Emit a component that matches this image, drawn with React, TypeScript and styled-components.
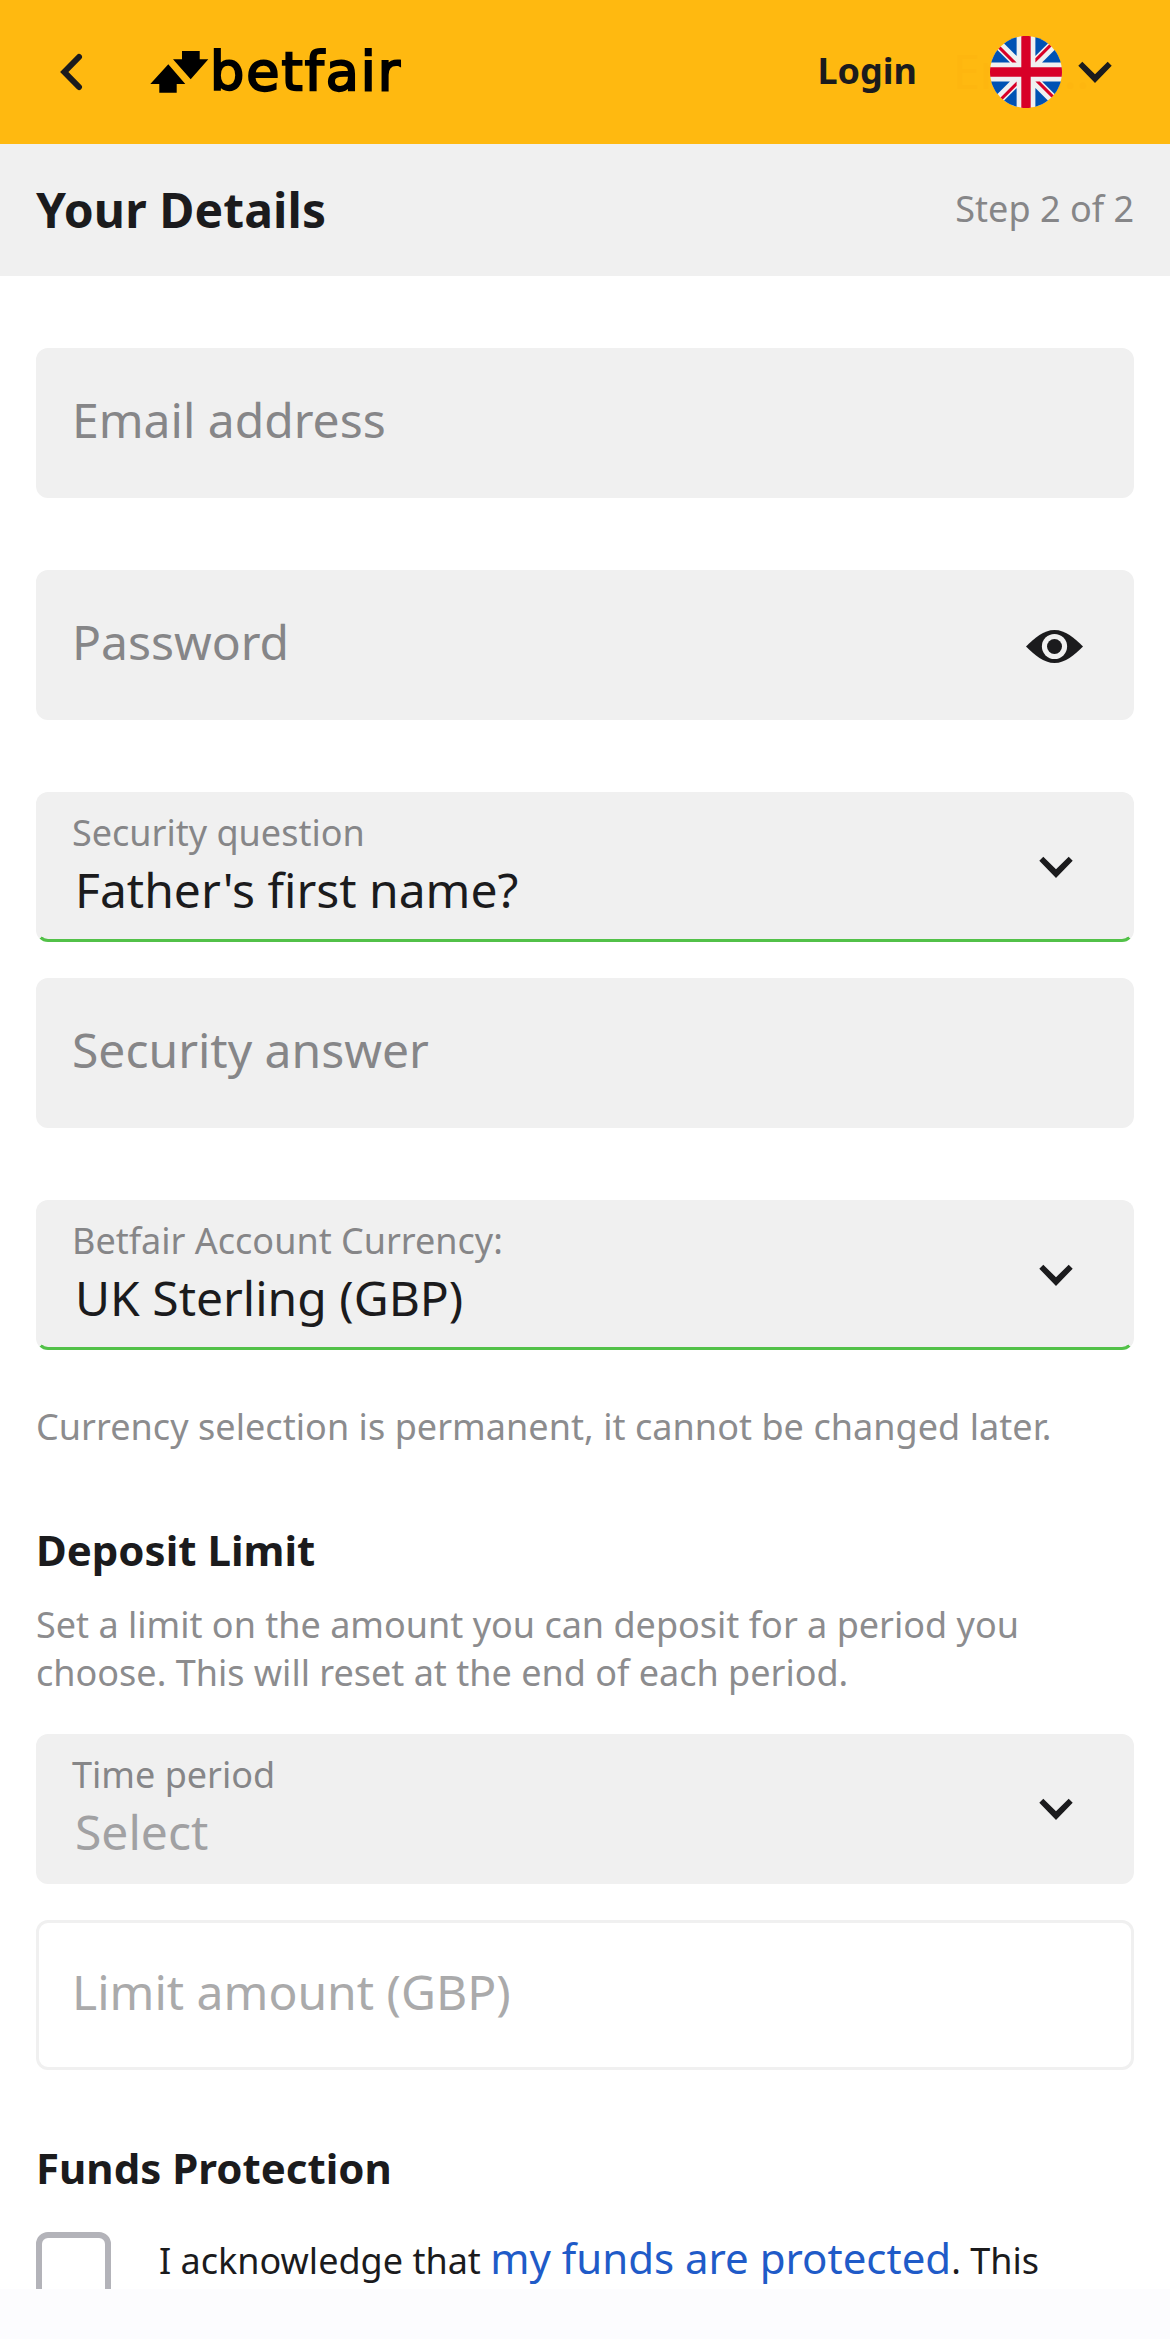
import React from 'react';
import styled, { createGlobalStyle } from 'styled-components';

const GlobalStyle = createGlobalStyle`
  *, *::before, *::after { box-sizing: border-box; }
  body {
    margin: 0;
    background: #fcfcfe;
    color: #1b1b1d;
    font-family: "Noto Sans", "Open Sans", sans-serif;
    font-size: 36px;
  }
  h1, h2, p { margin: 0; }
`;

const Page = styled.div`
  display: flex;
  flex-direction: column;
  width: 1170px;
  height: 2339px;
`;

const Screen = styled.div`
  height: 2289px;
  background: #fff;
  overflow: hidden;
`;

const Header = styled.header`
  display: flex;
  align-items: center;
  height: 144px;
  padding: 0 58px 0 60px;
  background: #ffb910;
`;

const BackButton = styled.button`
  display: flex;
  width: 90px;
  padding: 0;
  border: 0;
  background: none;
`;

const Logo = styled.div`
  display: flex;
  align-items: center;
  height: 42px;
  color: #000;
`;

const Wordmark = styled.span`
  margin-left: -1px;
  font-family: "DejaVu Sans", sans-serif;
  font-size: 54px;
  line-height: 42px;
  letter-spacing: 2px;
  -webkit-text-stroke: 2.2px #000;
`;

const Login = styled.a`
  margin-left: auto;
  padding-bottom: 2px;
  font-weight: 700;
  line-height: 48px;
`;

const Language = styled.div`
  position: relative;
  display: flex;
  align-items: center;
  gap: 52px;
  margin-left: 73px;
`;

const LanguageName = styled.span`
  position: absolute;
  left: -37px;
  top: -1px;
  color: #feb60f;
  font-size: 48px;
  line-height: 72px;
`;

const FlagIcon = styled.svg`
  position: relative;
  display: block;
  margin-right: -36px;
`;

const Glyph = styled.svg`
  display: block;
  flex: none;
  position: relative;
`;

const TitleBar = styled.div`
  display: flex;
  justify-content: space-between;
  align-items: center;
  height: 132px;
  padding: 0 36px;
  background: #f0f0f0;
`;

const Title = styled.h1`
  font-size: 48px;
  font-weight: 700;
  line-height: 60px;
  letter-spacing: 0.1px;
`;

const Step = styled.span`
  padding-bottom: 2px;
  color: #868688;
  line-height: 48px;
`;

const Form = styled.main`
  display: flex;
  flex-direction: column;
  padding: 72px 36px 0;
`;

const Field = styled.div<{ $gap?: number; $valid?: boolean; $outlined?: boolean }>`
  display: flex;
  align-items: center;
  justify-content: space-between;
  height: 150px;
  margin-top: ${({ $gap = 0 }) => $gap}px;
  padding: 0 33px;
  border: 3px solid #f0f0f0;
  border-bottom-color: ${({ $valid }) => ($valid ? '#52c148' : '#f0f0f0')};
  border-radius: 12px;
  background: ${({ $outlined }) => ($outlined ? '#fff' : '#f0f0f0')};
`;

const Placeholder = styled.span<{ $disabled?: boolean }>`
  padding-bottom: 6px;
  color: ${({ $disabled }) => ($disabled ? '#aaaaab' : '#868688')};
  font-size: 48px;
  line-height: 48px;
`;

const SelectText = styled.div`
  display: flex;
  flex-direction: column;
  align-self: flex-start;
  gap: 15px;
  padding-top: 20px;
`;

const Label = styled.span`
  color: #868688;
  line-height: 36px;
`;

const Value = styled.span<{ $empty?: boolean }>`
  padding-left: 3px;
  color: ${({ $empty }) => ($empty ? '#a1a1a3' : '#1b1b1d')};
  font-size: 48px;
  line-height: 48px;
`;

const IconSlot = styled.span<{ $right: number; $top?: number }>`
  align-self: flex-start;
  padding: ${({ $top = 61 }) => $top}px ${({ $right }) => $right}px 0 0;
`;

const Hint = styled.p<{ $gap: number; $tracking?: number }>`
  margin-top: ${({ $gap }) => $gap}px;
  color: #8c8c8e;
  line-height: 48px;
  letter-spacing: ${({ $tracking = 0 }) => $tracking}px;
`;

const Heading = styled.h2<{ $gap: number }>`
  margin-top: ${({ $gap }) => $gap}px;
  font-size: 42px;
  font-weight: 700;
  line-height: 60px;
`;

const Acknowledge = styled.label`
  display: flex;
  gap: 48px;
  margin-top: 34px;
`;

const Checkbox = styled.span`
  flex: none;
  width: 75px;
  height: 75px;
  border: 6px solid #b3b3b9;
  border-radius: 12px;
`;

const AckText = styled.p`
  padding-top: 2px;
  line-height: 48px;
`;

const Link = styled.a`
  color: #1f5bc8;
  font-size: 42px;
`;

const ChevronDown = () => (
  <Glyph width="34" height="22" viewBox="0 0 34 22" fill="#1b1b1d">
    <path d="M.3 4.7 4.3.7 17 13.3 29.7.7l4 4L17 22z" />
  </Glyph>
);

const ChevronLeft = () => (
  <Glyph width="24" height="38" viewBox="0 0 24 38" fill="none" stroke="#1b1b1d" strokeWidth="6" strokeLinecap="round">
    <path d="M19 4 4.3 19 19 34" />
  </Glyph>
);

const EyeIcon = () => (
  <Glyph width="57" height="33" viewBox="0 0 57 33">
    <path fill="#1b1b1d" d="M0 16.5C9 8 17.5 0 28.5 0S48 8 57 16.5C48 25 39.5 33 28.5 33S9 25 0 16.5z" />
    <circle cx="28.5" cy="16.5" r="12.6" fill="#f0f0f0" />
    <circle cx="28.5" cy="16.5" r="7.5" fill="#1b1b1d" />
  </Glyph>
);

const LogoArrows = () => (
  <Glyph width="61" height="42" viewBox="0 0 61 42" fill="#000">
    <path d="M18.3 13.3.3 33h9v8.7h17.4V33h8.6z" />
    <path d="M32 0h17.7v8.3h8.6l-17.6 20L23 8.3h9z" />
  </Glyph>
);

const UkFlag = () => (
  <FlagIcon width="72" height="72" viewBox="0 0 512 512">
    <circle cx="256" cy="256" r="256" fill="#f0f0f0" />
    <g fill="#0052b4">
      <path d="M52.92 100.142c-20.109 26.163-35.272 56.318-44.101 89.077h133.178z" />
      <path d="M503.181 189.219c-8.829-32.758-23.993-62.913-44.101-89.076l-89.075 89.076z" />
      <path d="M8.819 322.784c8.83 32.758 23.993 62.913 44.101 89.075l89.074-89.075z" />
      <path d="M411.858 52.921c-26.163-20.109-56.317-35.272-89.076-44.102v133.177z" />
      <path d="M100.142 459.079c26.163 20.109 56.318 35.272 89.076 44.102V370.005z" />
      <path d="M189.217 8.819c-32.758 8.83-62.913 23.993-89.075 44.101l89.075 89.075z" />
      <path d="M322.783 503.181c32.758-8.83 62.913-23.993 89.075-44.101l-89.075-89.075z" />
      <path d="M370.005 322.784l89.075 89.076c20.108-26.162 35.272-56.318 44.101-89.076z" />
    </g>
    <g fill="#d80027">
      <path d="M509.833 222.609H289.392V2.167C278.461.744 267.317 0 256 0c-11.319 0-22.461.744-33.391 2.167v220.441H2.167C.744 233.539 0 244.683 0 256c0 11.319.744 22.461 2.167 33.391h220.441v220.442C233.539 511.256 244.681 512 256 512c11.317 0 22.461-.743 33.391-2.167V289.392h220.442C511.256 278.461 512 267.319 512 256c0-11.317-.744-22.461-2.167-33.391z" />
      <path d="M322.783 322.784 437.019 437.02c5.254-5.252 10.266-10.743 15.048-16.435l-97.802-97.802z" />
      <path d="M189.217 322.784h-.002L74.98 437.019c5.252 5.254 10.743 10.266 16.435 15.048l97.802-97.804z" />
      <path d="M189.217 189.219v-.002L74.981 74.98c-5.254 5.252-10.266 10.743-15.048 16.435l97.803 97.803z" />
      <path d="M322.783 189.219 437.02 74.981c-5.252-5.254-10.743-10.266-16.435-15.047l-97.802 97.803z" />
    </g>
  </FlagIcon>
);

interface SelectFieldProps {
  label: string;
  value: string;
  gap: number;
  valid?: boolean;
  empty?: boolean;
}

const SelectField = ({ label, value, gap, valid, empty }: SelectFieldProps) => (
  <Field $gap={gap} $valid={valid}>
    <SelectText>
      <Label>{label}</Label>
      <Value $empty={empty}>{value}</Value>
    </SelectText>
    <IconSlot $right={25}>
      <ChevronDown />
    </IconSlot>
  </Field>
);

export default function App() {
  return (
    <Page>
      <GlobalStyle />
      <Screen>
        <Header>
          <BackButton aria-label="Back">
            <ChevronLeft />
          </BackButton>
          <Logo>
            <LogoArrows />
            <Wordmark>betfair</Wordmark>
          </Logo>
          <Login>Login</Login>
          <Language>
            <LanguageName>Engl…</LanguageName>
            <UkFlag />
            <ChevronDown />
          </Language>
        </Header>
        <TitleBar>
          <Title>Your Details</Title>
          <Step>Step 2 of 2</Step>
        </TitleBar>
        <Form>
          <Field>
            <Placeholder>Email address</Placeholder>
          </Field>
          <Field $gap={72}>
            <Placeholder>Password</Placeholder>
            <IconSlot $right={15} $top={57}>
              <EyeIcon />
            </IconSlot>
          </Field>
          <SelectField label="Security question" value="Father's first name?" gap={72} valid />
          <Field $gap={36}>
            <Placeholder>Security answer</Placeholder>
          </Field>
          <SelectField label="Betfair Account Currency:" value="UK Sterling (GBP)" gap={72} valid />
          <Hint $gap={53} $tracking={0.05}>
            Currency selection is permanent, it cannot be changed later.
          </Hint>
          <Heading $gap={69}>Deposit Limit</Heading>
          <Hint $gap={21}>
            Set a limit on the amount you can deposit for a period you choose. This will reset at the end of each
            period.
          </Hint>
          <SelectField label="Time period" value="Select" gap={37} empty />
          <Field $gap={36} $outlined>
            <Placeholder $disabled>Limit amount (GBP)</Placeholder>
          </Field>
          <Heading $gap={68}>Funds Protection</Heading>
          <Acknowledge>
            <Checkbox />
            <AckText>
              I acknowledge that <Link>my funds are protected</Link>. This
            </AckText>
          </Acknowledge>
        </Form>
      </Screen>
    </Page>
  );
}
